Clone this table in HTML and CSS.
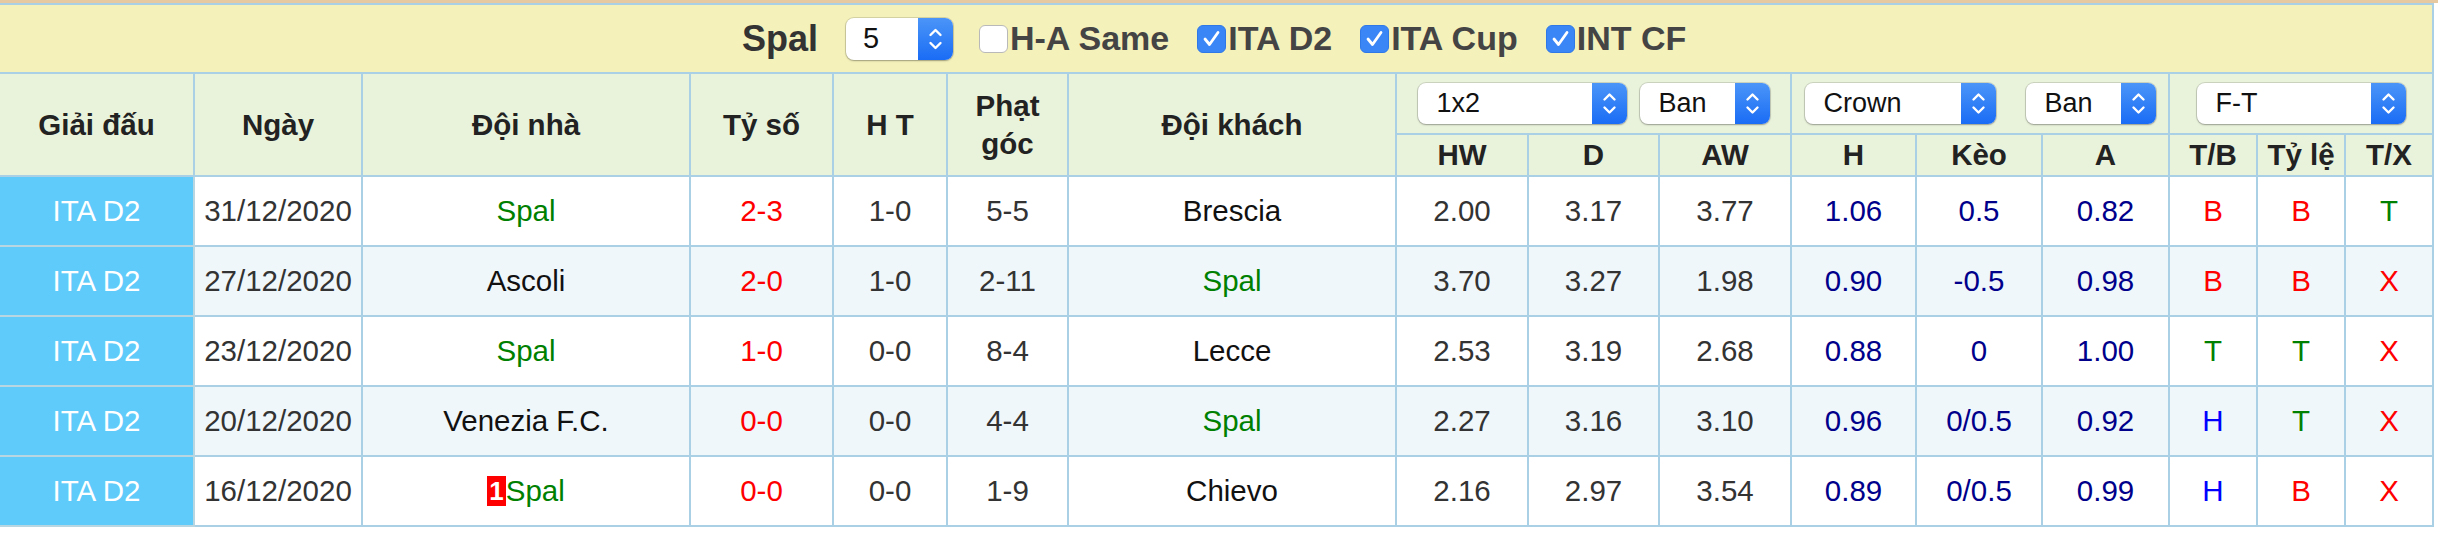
FILE: index.html
```html
<!DOCTYPE html>
<html lang="vi">
<head>
<meta charset="utf-8">
<title>Spal</title>
<link rel="stylesheet" href="styles.css">
</head>
<body>
<div class="strip"></div>
<table class="odds">
  <colgroup>
    <col class="c-league"><col class="c-date"><col class="c-team"><col class="c-score"><col class="c-ht"><col class="c-corner"><col class="c-team">
    <col class="c-hw"><col class="c-d"><col class="c-aw"><col class="c-h"><col class="c-keo"><col class="c-a"><col class="c-r"><col class="c-r"><col class="c-r">
  </colgroup>
  <tr class="title-row">
    <td colspan="16">
      <div class="title-bar">
        <span class="team-title">Spal</span>
        <span class="select sel-count"><span class="val">5</span><span class="arrow"><svg width="35" height="42" viewBox="0 0 35 42"><path d="M12.5 17 L17.5 12 L22.5 17 M12.5 25 L17.5 30 L22.5 25" fill="none" stroke="#fff" stroke-width="2.4" stroke-linecap="round" stroke-linejoin="round"/></svg></span></span>
        <label class="chk"><span class="box"></span>H-A Same</label>
        <label class="chk"><span class="box on"><svg width="29" height="27" viewBox="0 0 29 27"><path d="M8 14 L12.5 19.5 L21 7.5" fill="none" stroke="#fff" stroke-width="2.8" stroke-linecap="round" stroke-linejoin="round"/></svg></span>ITA D2</label>
        <label class="chk"><span class="box on"><svg width="29" height="27" viewBox="0 0 29 27"><path d="M8 14 L12.5 19.5 L21 7.5" fill="none" stroke="#fff" stroke-width="2.8" stroke-linecap="round" stroke-linejoin="round"/></svg></span>ITA Cup</label>
        <label class="chk last"><span class="box on"><svg width="29" height="27" viewBox="0 0 29 27"><path d="M8 14 L12.5 19.5 L21 7.5" fill="none" stroke="#fff" stroke-width="2.8" stroke-linecap="round" stroke-linejoin="round"/></svg></span>INT CF</label>
      </div>
    </td>
  </tr>
  <tr class="head-row1">
    <th rowspan="2" class="first">Giải đấu</th>
    <th rowspan="2">Ngày</th>
    <th rowspan="2">Đội nhà</th>
    <th rowspan="2">Tỷ số</th>
    <th rowspan="2">H T</th>
    <th rowspan="2" class="two">Phạt<br>góc</th>
    <th rowspan="2">Đội khách</th>
    <th colspan="3"><div class="sel-group g1">
      <span class="select w-1x2"><span class="val">1x2</span><span class="arrow"><svg width="35" height="41" viewBox="0 0 35 41"><path d="M12.5 16.5 L17.5 11.5 L22.5 16.5 M12.5 24.5 L17.5 29.5 L22.5 24.5" fill="none" stroke="#fff" stroke-width="2.4" stroke-linecap="round" stroke-linejoin="round"/></svg></span></span>
      <span class="select w-ban"><span class="val">Ban</span><span class="arrow"><svg width="35" height="41" viewBox="0 0 35 41"><path d="M12.5 16.5 L17.5 11.5 L22.5 16.5 M12.5 24.5 L17.5 29.5 L22.5 24.5" fill="none" stroke="#fff" stroke-width="2.4" stroke-linecap="round" stroke-linejoin="round"/></svg></span></span>
    </div></th>
    <th colspan="3"><div class="sel-group g2">
      <span class="select w-crown"><span class="val">Crown</span><span class="arrow"><svg width="35" height="41" viewBox="0 0 35 41"><path d="M12.5 16.5 L17.5 11.5 L22.5 16.5 M12.5 24.5 L17.5 29.5 L22.5 24.5" fill="none" stroke="#fff" stroke-width="2.4" stroke-linecap="round" stroke-linejoin="round"/></svg></span></span>
      <span class="select w-ban"><span class="val">Ban</span><span class="arrow"><svg width="35" height="41" viewBox="0 0 35 41"><path d="M12.5 16.5 L17.5 11.5 L22.5 16.5 M12.5 24.5 L17.5 29.5 L22.5 24.5" fill="none" stroke="#fff" stroke-width="2.4" stroke-linecap="round" stroke-linejoin="round"/></svg></span></span>
    </div></th>
    <th colspan="3"><div class="sel-group g3">
      <span class="select w-ft"><span class="val">F-T</span><span class="arrow"><svg width="35" height="41" viewBox="0 0 35 41"><path d="M12.5 16.5 L17.5 11.5 L22.5 16.5 M12.5 24.5 L17.5 29.5 L22.5 24.5" fill="none" stroke="#fff" stroke-width="2.4" stroke-linecap="round" stroke-linejoin="round"/></svg></span></span>
    </div></th>
  </tr>
  <tr class="head-row2">
    <th>HW</th><th>D</th><th>AW</th><th>H</th><th>Kèo</th><th>A</th><th>T/B</th><th>Tỷ lệ</th><th>T/X</th>
  </tr>
  <tr class="row">
    <td class="league">ITA D2</td><td class="date">31/12/2020</td><td class="team fav">Spal</td><td class="score">2-3</td><td class="dim">1-0</td><td class="dim">5-5</td><td class="team">Brescia</td>
    <td class="dim">2.00</td><td class="dim">3.17</td><td class="dim">3.77</td><td class="hc">1.06</td><td class="hc">0.5</td><td class="hc">0.82</td><td class="r-b">B</td><td class="r-b">B</td><td class="r-t">T</td>
  </tr>
  <tr class="row alt">
    <td class="league">ITA D2</td><td class="date">27/12/2020</td><td class="team">Ascoli</td><td class="score">2-0</td><td class="dim">1-0</td><td class="dim">2-11</td><td class="team fav">Spal</td>
    <td class="dim">3.70</td><td class="dim">3.27</td><td class="dim">1.98</td><td class="hc">0.90</td><td class="hc">-0.5</td><td class="hc">0.98</td><td class="r-b">B</td><td class="r-b">B</td><td class="r-b">X</td>
  </tr>
  <tr class="row">
    <td class="league">ITA D2</td><td class="date">23/12/2020</td><td class="team fav">Spal</td><td class="score">1-0</td><td class="dim">0-0</td><td class="dim">8-4</td><td class="team">Lecce</td>
    <td class="dim">2.53</td><td class="dim">3.19</td><td class="dim">2.68</td><td class="hc">0.88</td><td class="hc">0</td><td class="hc">1.00</td><td class="r-t">T</td><td class="r-t">T</td><td class="r-b">X</td>
  </tr>
  <tr class="row alt">
    <td class="league">ITA D2</td><td class="date">20/12/2020</td><td class="team">Venezia F.C.</td><td class="score">0-0</td><td class="dim">0-0</td><td class="dim">4-4</td><td class="team fav">Spal</td>
    <td class="dim">2.27</td><td class="dim">3.16</td><td class="dim">3.10</td><td class="hc">0.96</td><td class="hc">0/0.5</td><td class="hc">0.92</td><td class="r-h">H</td><td class="r-t">T</td><td class="r-b">X</td>
  </tr>
  <tr class="row">
    <td class="league">ITA D2</td><td class="date">16/12/2020</td><td class="team fav"><span class="card">1</span>Spal</td><td class="score">0-0</td><td class="dim">0-0</td><td class="dim">1-9</td><td class="team">Chievo</td>
    <td class="dim">2.16</td><td class="dim">2.97</td><td class="dim">3.54</td><td class="hc">0.89</td><td class="hc">0/0.5</td><td class="hc">0.99</td><td class="r-h">H</td><td class="r-b">B</td><td class="r-b">X</td>
  </tr>
</table>
</body>
</html>
```

FILE: styles.css
```css
html, body {
  margin: 0;
  padding: 0;
  background: #ffffff;
}

body {
  font-family: "Liberation Sans", Arial, Helvetica, sans-serif;
  color: #333333;
}

.strip {
  height: 3px;
  background: #e6c9a1;
}

.odds {
  border-collapse: collapse;
  table-layout: fixed;
  width: 2434px;
}

.c-league { width: 194px; }
.c-date { width: 168px; }
.c-team { width: 328px; }
.c-score { width: 143px; }
.c-ht { width: 114px; }
.c-corner { width: 121px; }
.c-hw { width: 132px; }
.c-d { width: 131px; }
.c-aw { width: 132px; }
.c-h { width: 125px; }
.c-keo { width: 126px; }
.c-a { width: 127px; }
.c-r { width: 88px; }

.odds td,
.odds th {
  border: 2px solid #a9d0e5;
  padding: 0;
  text-align: center;
  vertical-align: middle;
  white-space: nowrap;
}

.odds tr > :first-child {
  border-left: none;
}

/* title bar */
.title-row td {
  background: #f4f1bb;
  height: 67px;
}

.title-bar {
  display: flex;
  justify-content: center;
  align-items: center;
  padding-right: 4px;
}

.team-title {
  font-size: 36px;
  font-weight: bold;
  color: #333333;
  margin-right: 28px;
}

.select {
  display: inline-flex;
  align-items: stretch;
  height: 41px;
  box-sizing: border-box;
  background: #ffffff;
  border-radius: 8px;
  box-shadow: 0 0 0 1px rgba(0, 0, 0, 0.12), 0 1px 2px rgba(0, 0, 0, 0.25);
  overflow: hidden;
  font-size: 27px;
  font-weight: normal;
  color: #111111;
  text-align: left;
}

.select .val {
  flex: 1;
  display: flex;
  align-items: center;
  padding-left: 19px;
}

.select .arrow {
  width: 35px;
  flex: none;
  background: linear-gradient(#4b95f8, #1a6cf5);
  display: flex;
  align-items: center;
  justify-content: center;
}

.select .arrow svg {
  display: block;
}

.sel-count {
  width: 107px;
  height: 42px;
  margin-right: 26px;
}

.sel-count .val {
  padding-left: 17px;
  font-size: 29px;
}

.chk {
  display: inline-flex;
  align-items: center;
  font-size: 34px;
  font-weight: bold;
  color: #444444;
  margin-right: 28px;
}

.chk.last {
  margin-right: 0;
}

.box {
  width: 29px;
  height: 28px;
  box-sizing: border-box;
  border-radius: 6px;
  background: #ffffff;
  border: 1px solid #b9b9b9;
  margin-right: 2px;
  display: inline-block;
}

.box.on {
  background: #3a86f7;
  border-color: #2f78e8;
}

.box svg {
  display: block;
  margin: -1px;
}

/* headers */
.odds th {
  background: #e9f2db;
  font-size: 29.5px;
  font-weight: bold;
  color: #222222;
}

.head-row1 th {
  height: 59px;
}

.head-row2 th {
  height: 40px;
}

.odds th.two {
  line-height: 38px;
}

.sel-group {
  display: flex;
  justify-content: center;
  align-items: center;
}

.g1 {
  gap: 13px;
}

.g2 {
  gap: 30px;
}

.w-1x2 { width: 209px; }
.w-ban { width: 130px; }
.w-crown { width: 191px; }
.w-ft { width: 209px; }

/* data rows */
.row td {
  height: 68px;
  font-size: 29.5px;
  background: #ffffff;
}

.row.alt td {
  background: #f0f7fb;
}

.row td.league {
  background: #5ecbfa;
  color: #ffffff;
  border-color: #b7d6e2;
  border-left: none;
}

.date {
  color: #333333;
}

.team {
  color: #111111;
}

.team.fav {
  color: #008000;
}

.score {
  color: #ff0000;
}

.dim {
  color: #333333;
}

.hc {
  color: #00008b;
}

.r-b {
  color: #ff0000;
}

.r-t {
  color: #008000;
}

.r-h {
  color: #0000ff;
}

.card {
  display: inline-block;
  background: #ff0000;
  color: #ffffff;
  font-weight: bold;
  font-size: 26px;
  line-height: 30px;
  padding: 0 2px;
  vertical-align: 1px;
}
```
